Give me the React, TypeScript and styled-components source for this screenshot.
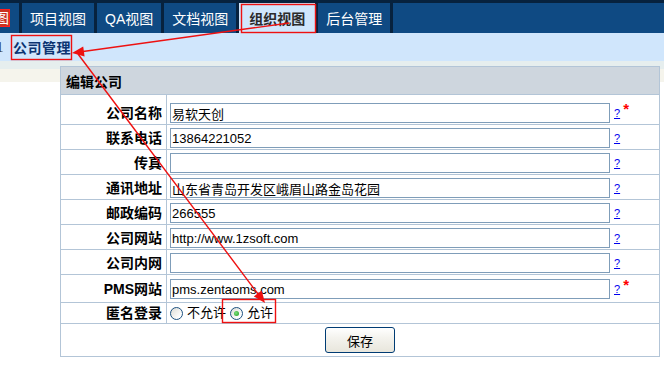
import React from "react";
import styled, { createGlobalStyle, css } from "styled-components";

const GlobalStyle = createGlobalStyle`
  html, body { margin: 0; padding: 0; background: #fff; }
  body { font-family: "Liberation Sans", "Noto Sans CJK SC", sans-serif; }
`;

const Page = styled.div`
  position: relative;
  width: 664px;
  height: 368px;
  overflow: hidden;
  background: #fff;
`;

const Nav = styled.nav`
  display: flex;
  height: 33px;
  box-sizing: border-box;
  padding-top: 3px;
  background: #07223e;
`;

const Tab = styled.div<{ $active?: boolean }>`
  display: flex;
  align-items: center;
  margin-left: 3px;
  padding: 0 8px;
  height: 30px;
  background: #0f4a83;
  color: #fff;
  font-size: 14px;
  white-space: nowrap;
  ${(p) =>
    p.$active &&
    css`
      background: #d0e6fc;
      color: #2b2b2b;
      font-weight: bold;
      padding: 0 10px;
    `}
`;

const CutTab = styled(Tab)`
  margin-left: 0;
  width: 19px;
  box-sizing: border-box;
  padding: 0 10px 0 0;
  justify-content: flex-end;
  overflow: hidden;
`;

const Marked = styled.span`
  flex: none;
  background: #c8321e;
  outline: 1px solid #ff2020;
  color: #fff;
  line-height: 16px;
`;

const Filler = styled.div`
  flex: 1;
  margin-left: 3px;
  background: #0f4a83;
`;

const Crumbs = styled.div`
  display: flex;
  align-items: center;
  height: 28px;
  background: #d0e6fc;
  font-size: 14px;
`;

const CrumbTail = styled.span`
  width: 17px;
  margin-left: -4px;
  color: #333;
  font-family: "Liberation Serif", serif;
  font-size: 15px;
`;

const CrumbCurrent = styled.span`
  color: #0b3471;
  font-weight: bold;
  font-size: 14px;
  letter-spacing: 0.5px;
`;

const Main = styled.main`
  height: 307px;
  box-sizing: border-box;
  padding: 5px 0 0 60px;
  background: linear-gradient(
    #e6eeee 0,
    #e6eeee 8px,
    #f5f4ec 8px,
    #f5f4ec 21px,
    #fff 21px
  );
`;

const Panel = styled.section`
  width: 600px;
  box-sizing: border-box;
  border: 1px solid #b3c5d7;
  background: #fff;
`;

const PanelHead = styled.div`
  display: flex;
  align-items: center;
  height: 27px;
  padding-left: 5px;
  background: #ced6de;
  border-bottom: 1px solid #b3c5d7;
  font-size: 14px;
  font-weight: bold;
  color: #000;
`;

const Row = styled.div<{ $h: number; $last?: boolean }>`
  display: grid;
  grid-template-columns: 106px 1fr;
  height: ${(p) => p.$h}px;
  border-bottom: ${(p) => (p.$last ? "none" : "1px solid #b3c5d7")};
`;

const Label = styled.div<{ $pad: number }>`
  display: flex;
  justify-content: flex-end;
  align-items: flex-end;
  padding: 0 4px ${(p) => p.$pad}px 0;
  border-right: 1px solid #b3c5d7;
  font-size: 14px;
  font-weight: bold;
  line-height: 20px;
  color: #000;
`;

const Value = styled.div<{ $pad: number; $center?: boolean }>`
  display: flex;
  align-items: ${(p) => (p.$center ? "center" : "flex-end")};
  padding: 0 0 ${(p) => p.$pad}px 3px;
`;

const TextInput = styled.input`
  width: 440px;
  height: 20px;
  box-sizing: border-box;
  margin: 0;
  border: 1px solid #7f9db9;
  padding: 0 1px;
  font-family: "Liberation Sans", "Noto Sans CJK SC", sans-serif;
  font-size: 13px;
  color: #000;
  background: #fff;
  outline: none;
`;

const HelpGroup = styled.span`
  display: flex;
  height: 20px;
  margin-left: 4px;
`;

const Help = styled.a`
  font-size: 11px;
  line-height: 20px;
  color: #0000ee;
  text-decoration: underline;
`;

const Star = styled.span`
  align-self: flex-start;
  margin-left: 3px;
  font-size: 15px;
  line-height: 12px;
  font-weight: bold;
  color: #ff0000;
`;

const Radio = styled.span<{ $on?: boolean }>`
  flex: none;
  width: 13px;
  height: 13px;
  box-sizing: border-box;
  border-radius: 50%;
  border: 1px solid #1c5180;
  background: linear-gradient(135deg, #dcdcd6, #ffffff 80%);
  display: flex;
  align-items: center;
  justify-content: center;
  ${(p) =>
    p.$on &&
    css`
      &::after {
        content: "";
        width: 5px;
        height: 5px;
        border-radius: 50%;
        background: radial-gradient(circle at 40% 40%, #7be07b, #1f9a1f);
      }
    `}
`;

const RadioText = styled.span<{ $gap?: number }>`
  margin: 0 ${(p) => p.$gap ?? 0}px 0 4px;
  font-size: 13px;
  line-height: 20px;
  color: #000;
`;

const ButtonRow = styled.div`
  display: flex;
  justify-content: center;
  align-items: center;
  height: 32px;
`;

const Button = styled.button`
  width: 70px;
  height: 26px;
  padding: 0;
  border: 1px solid #003c74;
  border-radius: 3px;
  background: linear-gradient(#ffffff, #f4f3ee 40%, #e8e6dc);
  font-family: "Noto Sans CJK SC", sans-serif;
  font-size: 13px;
  color: #000;
`;

const Overlay = styled.svg`
  position: absolute;
  left: 0;
  top: 0;
  pointer-events: none;
`;

type Field = {
  label: string;
  value: string;
  h: number;
  pad: number;
  required?: boolean;
};

const fields: Field[] = [
  { label: "公司名称", value: "易软天创", h: 29, pad: 1, required: true },
  { label: "联系电话", value: "13864221052", h: 24, pad: 1 },
  { label: "传真", value: "", h: 24, pad: 1 },
  { label: "通讯地址", value: "山东省青岛开发区峨眉山路金岛花园", h: 24, pad: 1 },
  { label: "邮政编码", value: "266555", h: 24, pad: 1 },
  { label: "公司网站", value: "http://www.1zsoft.com", h: 24, pad: 1 },
  { label: "公司内网", value: "", h: 24, pad: 1 },
  { label: "PMS网站", value: "pms.zentaoms.com", h: 27, pad: 3, required: true },
];

export default function App() {
  return (
    <Page>
      <GlobalStyle />
      <Nav>
        <CutTab>
          <Marked>图</Marked>
        </CutTab>
        <Tab>项目视图</Tab>
        <Tab>QA视图</Tab>
        <Tab>文档视图</Tab>
        <Tab $active>组织视图</Tab>
        <Tab>后台管理</Tab>
        <Filler />
      </Nav>
      <Crumbs>
        <CrumbTail>1</CrumbTail>
        <CrumbCurrent>公司管理</CrumbCurrent>
      </Crumbs>
      <Main>
        <Panel>
          <PanelHead>编辑公司</PanelHead>
          {fields.map((f) => (
            <Row key={f.label} $h={f.h}>
              <Label $pad={f.pad}>{f.label}</Label>
              <Value $pad={f.pad}>
                <TextInput readOnly value={f.value} />
                <HelpGroup>
                  <Help href="#">?</Help>
                  {f.required && <Star>*</Star>}
                </HelpGroup>
              </Value>
            </Row>
          ))}
          <Row $h={20}>
            <Label $pad={0}>匿名登录</Label>
            <Value $pad={0} $center>
              <Radio />
              <RadioText $gap={4}>不允许</RadioText>
              <Radio $on />
              <RadioText>允许</RadioText>
            </Value>
          </Row>
          <ButtonRow>
            <Button>保存</Button>
          </ButtonRow>
        </Panel>
      </Main>
      <Overlay width="664" height="368" viewBox="0 0 664 368">
        <g fill="none" stroke="#ee1111" strokeWidth="1.4">
          <rect x="241.5" y="4.5" width="74" height="28" />
          <rect x="11.5" y="35.5" width="60" height="24" />
          <rect x="222.5" y="299.5" width="53" height="23" />
          <line x1="289" y1="23" x2="83" y2="51.5" />
          <line x1="78" y1="54" x2="258" y2="294" />
        </g>
        <g fill="#ee1111">
          <polygon points="72,53 84.6,56.4 83.2,46.4" />
          <polygon points="265,303 261.7,290.4 253.8,296.4" />
        </g>
      </Overlay>
    </Page>
  );
}
